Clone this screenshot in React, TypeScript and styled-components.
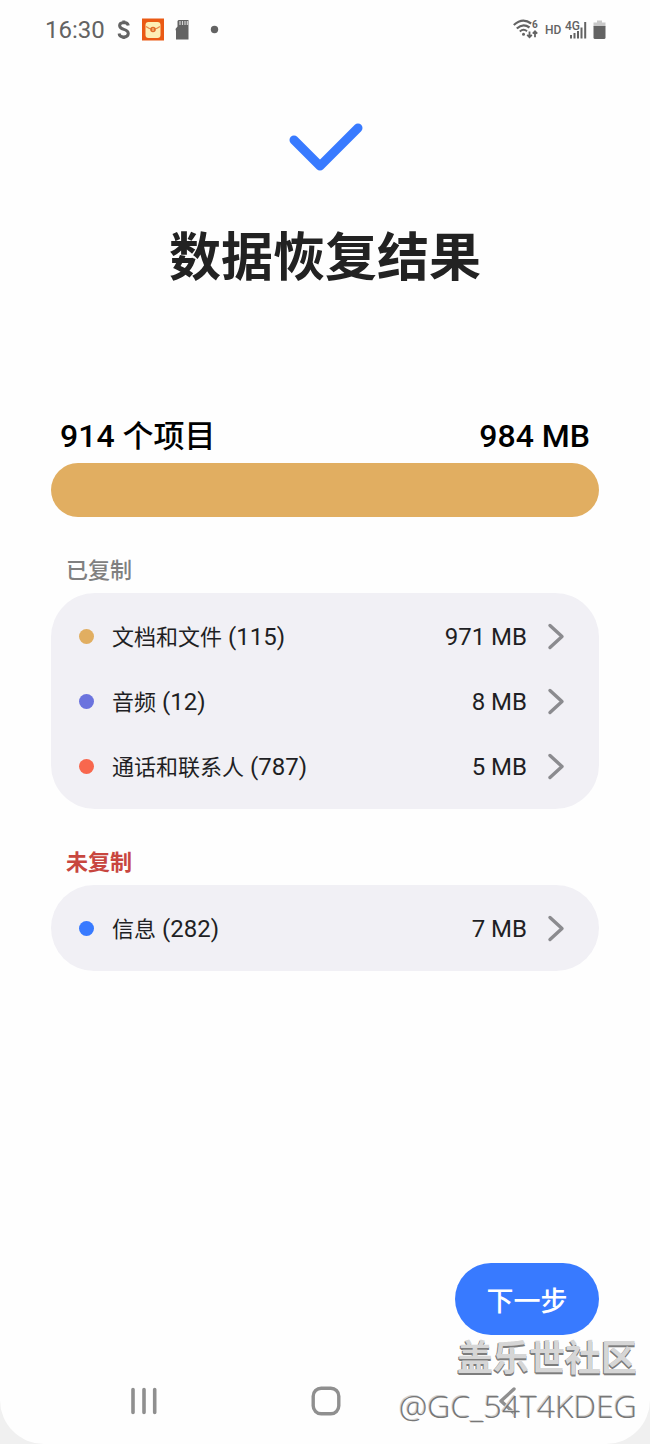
import React from 'react';
import styled, { createGlobalStyle } from 'styled-components';

const GlobalStyle = createGlobalStyle`
  *, *::before, *::after { box-sizing: border-box; }
  html { background: #f0f0f0; }
  body {
    margin: 0;
    font-family: Roboto, "Noto Sans CJK SC", sans-serif;
    color: #1f1f24;
  }
  button { font: inherit; color: inherit; border: 0; background: none; padding: 0; cursor: pointer; }
  svg { display: block; flex: none; }
`;

const Screen = styled.div`
  position: relative;
  display: flex;
  flex-direction: column;
  min-height: 100vh;
  background: #fefefe;
  border-radius: 0 0 44px 44px;
`;

const StatusBar = styled.header`
  display: flex;
  align-items: center;
  justify-content: space-between;
  height: 60px;
  padding: 0 43px 0 45px;
  color: #636363;
`;

const StatusGroup = styled.div`
  display: flex;
  align-items: center;
  gap: 11px;
`;

const Clock = styled.time`
  font-size: 24px;
  line-height: 32px;
`;

const Main = styled.main`
  flex: 1;
  display: flex;
  flex-direction: column;
  padding: 60px 51px 0;
`;

const CheckMark = styled.svg`
  align-self: center;
`;

const Title = styled.h1`
  margin: 49px 0 0;
  font-size: 52px;
  line-height: 72px;
  font-weight: 700;
  text-align: center;
  color: #222222;
`;

const Summary = styled.div`
  display: flex;
  justify-content: space-between;
  align-items: center;
  height: 40px;
  margin-top: 121px;
  padding: 0 9px;
  font-size: 31px;
  line-height: 40px;
  font-weight: 500;
  color: #000000;
`;

const Latin = styled.span<{ $size: number }>`
  font-size: ${(p) => p.$size}px;
`;

const UsageBar = styled.div`
  height: 54px;
  margin-top: 7px;
  border-radius: 27px;
  background: #e1ae61;
`;

const Section = styled.section`
  margin-top: 39px;
`;

const SectionTitle = styled.h2<{ $color: string; $strong?: boolean }>`
  margin: 0 0 7px;
  padding-left: 15px;
  font-size: 22px;
  line-height: 30px;
  font-weight: ${(p) => (p.$strong ? 700 : 500)};
  color: ${(p) => p.$color};
`;

const Card = styled.ul`
  margin: 0;
  padding: 11px 0 10px;
  list-style: none;
  border-radius: 44px;
  background: #f1f0f5;
`;

const RowButton = styled.button`
  display: flex;
  align-items: center;
  width: 100%;
  height: 65px;
  padding: 0 34px 0 28px;
  text-align: left;
  font-size: 22px;
  line-height: 32px;
`;

const Dot = styled.span<{ $color: string }>`
  width: 15px;
  height: 15px;
  margin-right: 18px;
  border-radius: 50%;
  background: ${(p) => p.$color};
`;

const RowText = styled.span`
  flex: 1;
  display: flex;
  align-items: baseline;
  justify-content: space-between;
  padding-top: 2px;
  margin-right: 20px;
`;

const Actions = styled.div`
  display: flex;
  justify-content: flex-end;
  margin-top: auto;
`;

const NextButton = styled.button`
  && {
    width: 144px;
    height: 72px;
    border-radius: 36px;
    background: #387aff;
    color: #ffffff;
    font-size: 27px;
    font-weight: 500;
  }
`;

const NavBar = styled.nav`
  display: flex;
  justify-content: space-between;
  align-items: center;
  height: 86px;
  margin-top: 23px;
  padding: 0 124px 0 126px;
`;

const NavButton = styled.button`
  display: flex;
  align-items: center;
  justify-content: center;
  width: 36px;
  height: 36px;
`;

const Watermark = styled.div`
  position: absolute;
  right: 13px;
  bottom: 14px;
  text-align: right;
  pointer-events: none;
`;

const WatermarkName = styled.div`
  font-size: 36px;
  line-height: 46px;
  font-weight: 700;
  color: #d6d6d6;
  text-shadow: -1px 1px 0 #7d7d7d, 0 2px 0 #7d7d7d;
`;

const WatermarkUser = styled.div`
  font-family: "Open Sans", "Noto Sans", sans-serif;
  font-size: 32px;
  line-height: 48px;
  font-weight: 300;
  color: #777777;
  text-shadow: -1px -1px 0 #d2d2d2;
`;

type Item = { name: string; count: number; size: string; color: string };

const copied: Item[] = [
  { name: '文档和文件', count: 115, size: '971 MB', color: '#e1ae61' },
  { name: '音频', count: 12, size: '8 MB', color: '#6b73de' },
  { name: '通话和联系人', count: 787, size: '5 MB', color: '#f8674d' },
];

const notCopied: Item[] = [{ name: '信息', count: 282, size: '7 MB', color: '#387aff' }];

function ItemList({ items }: { items: Item[] }) {
  return (
    <Card>
      {items.map((item) => (
        <li key={item.name}>
          <RowButton type="button">
            <Dot $color={item.color} />
            <RowText>
              <span>
                {item.name}
                <Latin $size={24}> ({item.count})</Latin>
              </span>
              <Latin $size={24}>{item.size}</Latin>
            </RowText>
            <svg width="18" height="28" viewBox="0 0 18 28" fill="none" stroke="#8b8b8f" strokeWidth="3.4" strokeLinecap="round" strokeLinejoin="round" aria-hidden="true">
              <path d="M3 2.500 L15 13.500 L3 24.500" />
            </svg>
          </RowButton>
        </li>
      ))}
    </Card>
  );
}

function NotificationIcons() {
  return (
    <svg width="104" height="28" viewBox="116 16 104 28" fontFamily="Roboto, sans-serif" aria-hidden="true">
      <path d="M128.300 25.500 Q127.800 22.400 123.800 22.400 Q119.600 22.600 119.600 25.600 Q119.600 28.300 123.800 29.400 Q128.300 30.700 128.300 33.700 Q128 37 123.800 37 Q119.500 37 119.100 33.500 M123.800 20.500 V22.500 M123.800 37 V39" fill="none" stroke="#636363" strokeWidth="3" />
      <rect x="142" y="18.500" width="22" height="22" fill="#ea5a14" />
      <rect x="145.500" y="22" width="15" height="16" rx="3" fill="#fdeeb4" />
      <path d="M146 26.500 Q153 32 160 26.500" fill="none" stroke="#e8874a" strokeWidth="1.200" />
      <circle cx="153" cy="29.500" r="2.800" fill="#df6a28" />
      <path d="M153 28 V31" stroke="#fdd58a" strokeWidth="1" />
      <path d="M178.500 20 H188.500 V39.500 H176 V31 L175.500 29 L177.500 26.500 V21 Z" fill="#636363" />
      <path d="M180 21 V25 M182.500 21 V25 M185 21 V25 M187.300 21 V25" stroke="#d5d5d5" strokeWidth="1.200" />
      <circle cx="214.500" cy="29.500" r="3.700" fill="#636363" />
    </svg>
  );
}

function SystemIcons() {
  return (
    <svg width="96" height="28" viewBox="511 16 96 28" fill="none" stroke="#636363" fontFamily="Roboto, sans-serif" aria-hidden="true">
      <path d="M513.800 25 Q522.500 17 531.200 23.500" strokeWidth="2.200" />
      <path d="M516.800 28.500 Q523 22.600 529.500 27.500" strokeWidth="2.200" />
      <path d="M519.800 31.500 Q523.500 28.300 527 31.200" strokeWidth="2" />
      <circle cx="523.500" cy="34.200" r="1.500" fill="#636363" stroke="none" />
      <path d="M529.500 31.500 V37 M527.200 34.800 L529.500 37.200 L531.800 34.800" strokeWidth="1.800" />
      <path d="M535 37.200 V31.500 M532.800 33.700 L535 31.300 L537.200 33.700" strokeWidth="1.800" />
      <g fill="#636363" stroke="none" fontWeight="700">
        <text x="532" y="28" fontSize="10">6</text>
        <text x="545" y="34" fontSize="12" fontWeight="500">HD</text>
        <text x="565" y="30" fontSize="12" fontWeight="500">4G</text>
      </g>
      <path d="M571 35 V38.500 M574.500 33 V38.500 M578 31 V38.500 M581.500 27.500 V38.500 M585.200 22 V38.500" strokeWidth="2" />
      <path d="M597 20.500 H602 V22.500 H605.500 V26.500 H593.500 V22.500 H597 Z" fill="#c8c8c8" stroke="none" />
      <path d="M593.500 26 H605.500 V37.500 Q605.500 39 604 39 H595 Q593.500 39 593.500 37.500 Z" fill="#636363" stroke="none" />
    </svg>
  );
}

export default function App() {
  return (
    <>
      <GlobalStyle />
      <Screen>
        <StatusBar>
          <StatusGroup>
            <Clock>16:30</Clock>
            <NotificationIcons />
          </StatusGroup>
          <SystemIcons />
        </StatusBar>

        <Main>
          <CheckMark width="76" height="54" viewBox="0 0 76 54" fill="none" stroke="#387aff" strokeWidth="9" strokeLinecap="round" strokeLinejoin="round" aria-hidden="true">
            <path d="M7 20 L33 46 L71 8" />
          </CheckMark>
          <Title>数据恢复结果</Title>

          <Summary>
            <span>
              <Latin $size={32}>914 </Latin>个项目
            </span>
            <Latin $size={32}>984 MB</Latin>
          </Summary>
          <UsageBar />

          <Section>
            <SectionTitle $color="#808080">已复制</SectionTitle>
            <ItemList items={copied} />
          </Section>
          <Section>
            <SectionTitle $color="#c8463f" $strong>
              未复制
            </SectionTitle>
            <ItemList items={notCopied} />
          </Section>

          <Actions>
            <NextButton type="button">下一步</NextButton>
          </Actions>
        </Main>

        <NavBar>
          <NavButton type="button" aria-label="最近任务">
            <svg width="28" height="28" viewBox="0 0 28 28" stroke="#8f8f8f" strokeWidth="3.600" strokeLinecap="round">
              <path d="M3 2.500 V25.500 M14 2.500 V25.500 M24.700 2.500 V25.500" />
            </svg>
          </NavButton>
          <NavButton type="button" aria-label="主屏幕">
            <svg width="30" height="30" viewBox="0 0 30 30" fill="none" stroke="#8f8f8f" strokeWidth="3.400">
              <rect x="2.200" y="2.200" width="25.600" height="25.600" rx="8" />
            </svg>
          </NavButton>
          <NavButton type="button" aria-label="返回">
            <svg width="22" height="30" viewBox="0 0 22 30" fill="none" stroke="#8f8f8f" strokeWidth="3.400" strokeLinecap="round" strokeLinejoin="round">
              <path d="M17 3 L4 15 L17 27" />
            </svg>
          </NavButton>
        </NavBar>

        <Watermark>
          <WatermarkName>盖乐世社区</WatermarkName>
          <WatermarkUser>@GC_54T4KDEG</WatermarkUser>
        </Watermark>
      </Screen>
    </>
  );
}
